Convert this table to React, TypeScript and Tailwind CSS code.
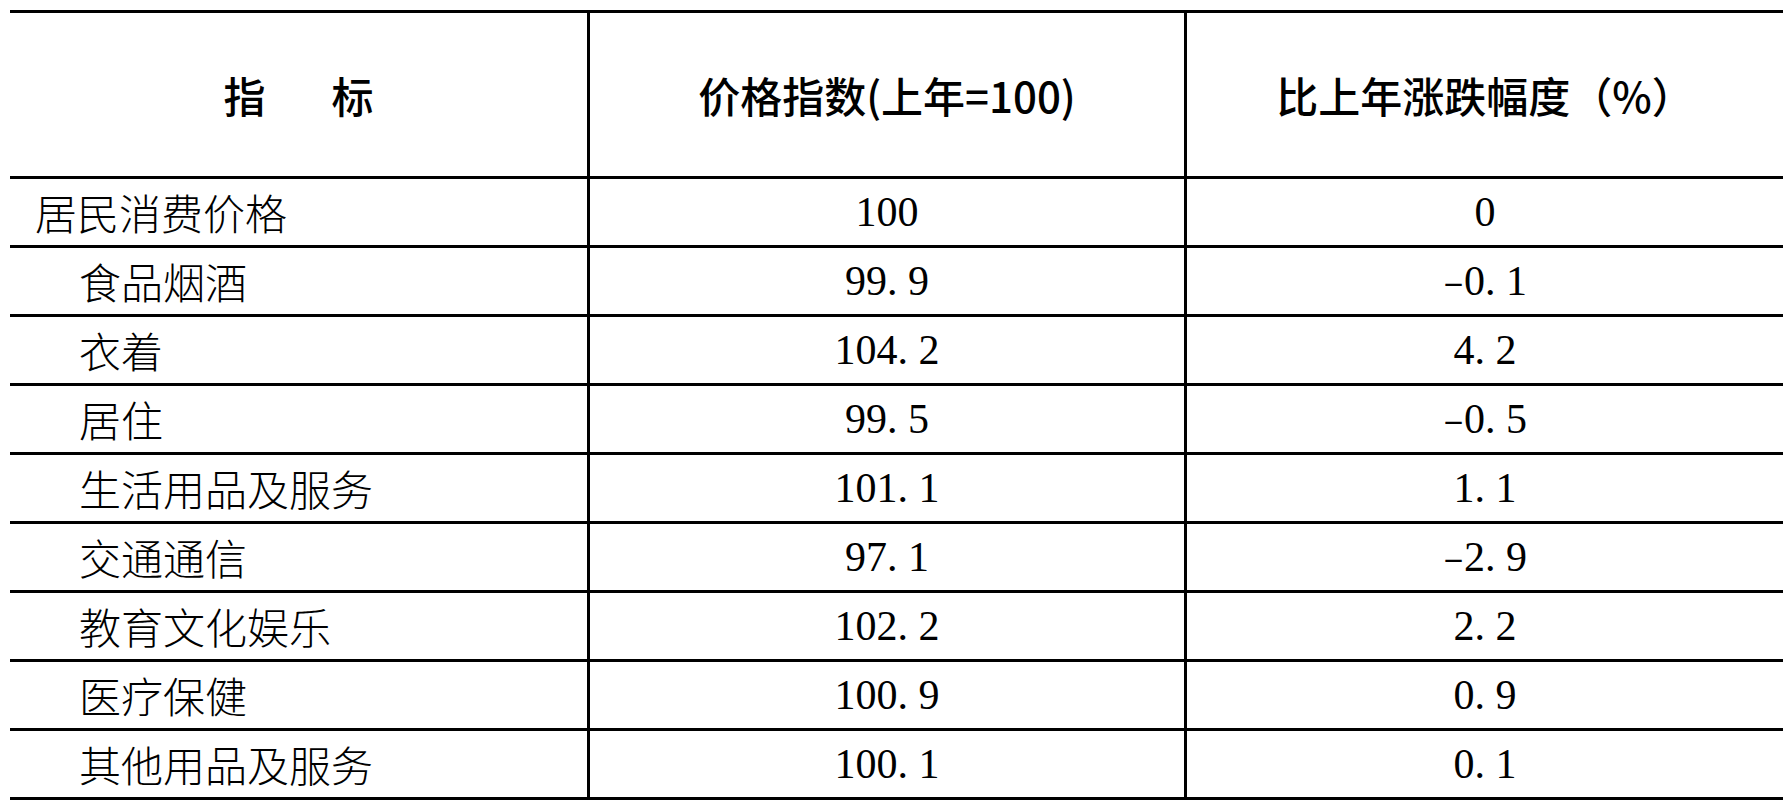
import React from "react";

const rows: { label: string; idx: string; chg: string; top?: boolean }[] = [
  { label: "居民消费价格", idx: "100", chg: "0", top: true },
  { label: "食品烟酒", idx: "99.9", chg: "-0.1" },
  { label: "衣着", idx: "104.2", chg: "4.2" },
  { label: "居住", idx: "99.5", chg: "-0.5" },
  { label: "生活用品及服务", idx: "101.1", chg: "1.1" },
  { label: "交通通信", idx: "97.1", chg: "-2.9" },
  { label: "教育文化娱乐", idx: "102.2", chg: "2.2" },
  { label: "医疗保健", idx: "100.9", chg: "0.9" },
  { label: "其他用品及服务", idx: "100.1", chg: "0.1" },
];

function Num({ v }: { v: string }) {
  const parts = v.split(/(\.|-)/);
  return (
    <span className="font-['Liberation_Serif',serif] text-[42px] leading-none text-black">
      {parts.map((p, i) =>
        p === "." ? (
          <span key={i} className="inline-block w-[0.5em] text-left">
            .
          </span>
        ) : p === "-" ? (
          <span key={i} className="inline-block w-[0.5em] text-center scale-x-150 scale-y-75">
            -
          </span>
        ) : p === "" ? null : (
          <span key={i}>{p}</span>
        )
      )}
    </span>
  );
}

export default function App() {
  return (
    <div className="w-[1783px] h-[804px] bg-white pt-[10px] pl-[10px] overflow-hidden">
      <div className="w-[1773px] border-t-[3px] border-black">
        <div className="grid grid-cols-[580px_597px_596px] h-[166px] border-b-[3px] border-black font-['Noto_Sans_CJK_SC',sans-serif] font-medium text-[42px] text-black">
          <div className="flex items-center justify-center border-r-[3px] border-black">
            <span>指</span>
            <span className="ml-[66px]">标</span>
          </div>
          <div className="flex items-center justify-center border-r-[3px] border-black">
            <span>价格指数(上年=100)</span>
          </div>
          <div className="flex items-center justify-center">
            <span>比上年涨跌幅度（%）</span>
          </div>
        </div>
        {rows.map((r) => (
          <div
            key={r.label}
            className="grid grid-cols-[580px_597px_596px] h-[69px] border-b-[3px] border-black"
          >
            <div
              className={
                "flex items-center border-r-[3px] border-black font-['Noto_Sans_CJK_SC',sans-serif] font-light text-[42px] leading-none text-black " +
                (r.top ? "pl-[25px]" : "pl-[69px]")
              }
            >
              {r.label}
            </div>
            <div className="flex items-center justify-center border-r-[3px] border-black">
              <Num v={r.idx} />
            </div>
            <div className="flex items-center justify-center">
              <Num v={r.chg} />
            </div>
          </div>
        ))}
      </div>
    </div>
  );
}
